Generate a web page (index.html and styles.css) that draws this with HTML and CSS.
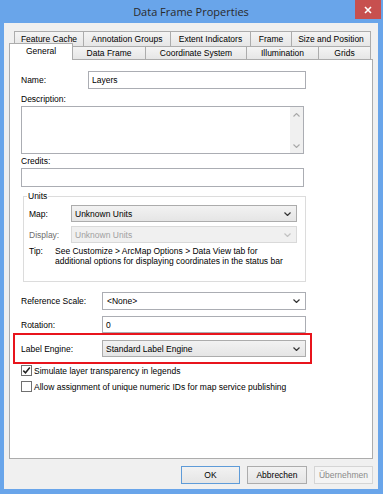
FILE: index.html
```
<!DOCTYPE html>
<html>
<head>
<meta charset="utf-8">
<title>Data Frame Properties</title>
<link rel="stylesheet" href="styles.css">
</head>
<body>
<div class="window">
  <div class="titlebar">
    <div></div>
    <div class="title">Data Frame Properties</div>
    <div class="close-wrap">
      <div class="close">
        <svg width="8" height="8" viewBox="0 0 8 8"><path d="M1 1 L7 7 M7 1 L1 7" stroke="#fff" stroke-width="1.6" fill="none"/></svg>
      </div>
    </div>
  </div>
  <div class="client">
    <div class="tabrow row1">
      <div class="tab t-fc">Feature Cache</div>
      <div class="tab t-ag">Annotation Groups</div>
      <div class="tab t-ei">Extent Indicators</div>
      <div class="tab t-fr">Frame</div>
      <div class="tab t-sp">Size and Position</div>
    </div>
    <div class="tabrow row2">
      <div class="tab sel t-ge">General</div>
      <div class="tab t-df">Data Frame</div>
      <div class="tab t-cs">Coordinate System</div>
      <div class="tab t-il">Illumination</div>
      <div class="tab t-gr">Grids</div>
    </div>
    <div class="panel">
      <div class="row h18">
        <span class="lbl w-name">Name:</span>
        <div class="input w-nameinput">Layers</div>
      </div>
      <div class="caption cap-desc">Description:</div>
      <div class="textarea">
        <div class="scroll">
          <svg width="7" height="4" viewBox="0 0 7 4"><polyline points="0.5,3.5 3.5,0.5 6.5,3.5" stroke="#a8a8a8" stroke-width="1.1" fill="none"/></svg>
          <svg width="7" height="4" viewBox="0 0 7 4"><polyline points="0.5,0.5 3.5,3.5 6.5,0.5" stroke="#a8a8a8" stroke-width="1.1" fill="none"/></svg>
        </div>
      </div>
      <div class="caption cap-cred">Credits:</div>
      <div class="input w-wide h19"></div>

      <fieldset class="group">
        <legend>Units</legend>
        <div class="row h17 g-map">
          <span class="lbl w-unit">Map:</span>
          <div class="combo w-unitcombo">
            <span class="ctext">Unknown Units</span>
            <svg class="chev" width="7" height="4" viewBox="0 0 7 4"><polyline points="0.5,0.5 3.5,3.5 6.5,0.5" stroke="#333" stroke-width="1.2" fill="none"/></svg>
          </div>
        </div>
        <div class="row h17 g-disp">
          <span class="lbl w-unit dim">Display:</span>
          <div class="combo disabled w-unitcombo">
            <span class="ctext">Unknown Units</span>
            <svg class="chev" width="7" height="4" viewBox="0 0 7 4"><polyline points="0.5,0.5 3.5,3.5 6.5,0.5" stroke="#c2c2c2" stroke-width="1.2" fill="none"/></svg>
          </div>
        </div>
        <div class="tip">
          <span class="tiplbl">Tip:</span>
          <span class="tiptext">See Customize &gt; ArcMap Options &gt; Data View tab for<br>additional options for displaying coordinates in the status bar</span>
        </div>
      </fieldset>

      <div class="row h18 r-ref">
        <span class="lbl w-lbl2">Reference Scale:</span>
        <div class="combo editable w-combo2">
          <span class="ctext">&lt;None&gt;</span>
          <svg class="chev" width="7" height="4" viewBox="0 0 7 4"><polyline points="0.5,0.5 3.5,3.5 6.5,0.5" stroke="#333" stroke-width="1.2" fill="none"/></svg>
        </div>
      </div>
      <div class="row h17 r-rot">
        <span class="lbl w-lbl2">Rotation:</span>
        <div class="input w-combo2 h17">0</div>
      </div>
      <div class="highlight">
        <div class="row h17">
          <span class="lbl w-lbl2">Label Engine:</span>
          <div class="combo w-combo2">
            <span class="ctext">Standard Label Engine</span>
            <svg class="chev" width="7" height="4" viewBox="0 0 7 4"><polyline points="0.5,0.5 3.5,3.5 6.5,0.5" stroke="#333" stroke-width="1.2" fill="none"/></svg>
          </div>
        </div>
      </div>
      <div class="cbrow cb1">
        <span class="cb">
          <svg width="9" height="9" viewBox="0 0 9 9"><polyline points="1.3,4.6 3.5,6.8 7.8,1.6" stroke="#222" stroke-width="1.5" fill="none"/></svg>
        </span>
        <span class="cbtext">Simulate layer transparency in legends</span>
      </div>
      <div class="cbrow cb2">
        <span class="cb"></span>
        <span class="cbtext">Allow assignment of unique numeric IDs for map service publishing</span>
      </div>
    </div>
    <div class="buttons">
      <div class="btn default">OK</div>
      <div class="btn w60">Abbrechen</div>
      <div class="btn off">Übernehmen</div>
    </div>
  </div>
</div>
</body>
</html>
```
FILE: styles.css
```
html, body {
  margin: 0;
  padding: 0;
}
body {
  font-family: "Liberation Sans", Arial, sans-serif;
  font-size: 8.5px;
  color: #000;
}
.window {
  width: 383px;
  height: 494px;
  box-sizing: border-box;
  background: #69a5ea;
  padding: 0 5px 5px 4px;
  display: flex;
  flex-direction: column;
}
.titlebar {
  height: 23px;
  flex: none;
  display: grid;
  grid-template-columns: 1fr auto 1fr;
  align-items: start;
}
.title {
  font-family: "Open Sans", "Noto Sans", sans-serif;
  font-size: 11px;
  line-height: 23px;
  color: #2a2a2a;
  white-space: nowrap;
}
.close-wrap {
  display: flex;
  justify-content: flex-end;
  margin-right: -3px;
}
.close {
  width: 26px;
  height: 19px;
  background: #c7504f;
  display: flex;
  align-items: center;
  justify-content: center;
}
.client {
  flex: 1;
  background: #f0f0f0;
  padding: 8px 5px 0 5px;
  display: flex;
  flex-direction: column;
}
.tabrow {
  display: flex;
  flex: none;
}
.row1 {
  height: 15px;
  margin-left: 5px;
}
.row2 {
  height: 13px;
  align-items: flex-end;
}
.tab {
  box-sizing: border-box;
  flex: none;
  border: 1px solid #acacac;
  border-bottom: none;
  background: linear-gradient(#f4f4f4, #e6e6e6);
  display: flex;
  align-items: center;
  justify-content: center;
  white-space: nowrap;
  margin-left: -1px;
}
.tab:first-child {
  margin-left: 0;
}
.row1 .tab { height: 15px; }
.row2 .tab { height: 13px; }
.row2 .tab.sel {
  height: 17px;
  margin-bottom: -1px;
  background: #fff;
  position: relative;
  z-index: 1;
  padding-bottom: 2px;
}
.t-fc { width: 70px; }
.t-ag { width: 88px; }
.t-ei { width: 81px; }
.t-fr { width: 42px; }
.t-sp { width: 80px; }
.t-ge { width: 64px; }
.t-df { width: 74px; }
.t-cs { width: 102px; }
.t-il { width: 73px; }
.t-gr { width: 53px; }

.panel {
  flex: none;
  box-sizing: border-box;
  height: 400px;
  background: #fff;
  border: 1px solid #acacac;
  padding: 11px 0 0 11px;
  display: flex;
  flex-direction: column;
  align-items: flex-start;
}
.row {
  display: flex;
  align-items: center;
  flex: none;
}
.h17 { height: 17px; }
.h18 { height: 18px; }
.h19 { height: 19px; }
.lbl {
  flex: none;
  white-space: nowrap;
}
.dim { color: #6d6d6d; }
.w-name { width: 67px; }
.w-unit { width: 42px; }
.w-lbl2 { width: 81px; }

.input {
  box-sizing: border-box;
  border: 1px solid #abadb3;
  background: #fff;
  height: 18px;
  display: flex;
  align-items: center;
  padding-left: 3px;
  flex: none;
}
.input.h17 { height: 17px; }
.input.h19 { height: 19px; }
.w-nameinput { width: 218px; }
.w-wide { width: 283px; }
.w-combo2 { width: 204px; }
.w-unitcombo { width: 226px; }

.caption {
  line-height: 10px;
  flex: none;
}
.cap-desc { margin: 5px 0 2px; }
.cap-cred { margin: 2px 0 2px; }

.textarea {
  box-sizing: border-box;
  width: 283px;
  height: 48px;
  border: 1px solid #abadb3;
  background: #fff;
  display: flex;
  justify-content: flex-end;
  flex: none;
}
.scroll {
  width: 13px;
  background: #f0f0f0;
  display: flex;
  flex-direction: column;
  justify-content: space-between;
  align-items: center;
  padding: 6px 0 5px;
  box-sizing: border-box;
}

.group {
  box-sizing: border-box;
  width: 283px;
  margin: 4px 0 0 2px;
  padding: 0 0 15px 5px;
  border: 1px solid #dcdcdc;
  min-width: 0;
  flex: none;
}
.group legend {
  padding: 0 1px;
  margin-left: -2px;
  line-height: 10px;
}
.g-map { margin-top: 4px; }
.g-disp { margin-top: 4px; }
.tip {
  display: flex;
  margin-top: 3px;
  line-height: 10px;
}
.tiplbl {
  width: 26px;
  flex: none;
}
.tiptext {
  white-space: nowrap;
}

.combo {
  box-sizing: border-box;
  height: 17px;
  border: 1px solid #acacac;
  background: linear-gradient(#f2f2f2, #e5e5e5);
  display: flex;
  align-items: center;
  padding: 0 5px 0 3px;
  flex: none;
}
.r-ref .combo { height: 18px; }
.combo .ctext {
  flex: 1;
  white-space: nowrap;
}
.combo .chev {
  flex: none;
}
.combo.disabled {
  background: #f0f0f0;
  border-color: #d9d9d9;
  color: #a0a0a0;
}
.combo.editable {
  background: #fff;
  border-color: #abadb3;
  padding-left: 4px;
}
.r-ref { margin-top: 10px; }
.r-rot { margin-top: 6px; }

.highlight {
  box-sizing: border-box;
  width: 299px;
  margin-left: -8px;
  border: 2px solid #e8141c;
  padding: 5px 0 5px 6px;
  flex: none;
}

.cbrow {
  display: flex;
  align-items: center;
  height: 13px;
  flex: none;
}
.cb1 { margin-top: 0; }
.cb2 { margin-top: 3px; }
.cb {
  box-sizing: border-box;
  width: 11px;
  height: 11px;
  border: 1px solid #707070;
  background: #fff;
  display: flex;
  align-items: center;
  justify-content: center;
  flex: none;
}
.cbtext {
  margin-left: 2px;
  white-space: nowrap;
}

.buttons {
  display: flex;
  justify-content: flex-end;
  gap: 7px;
  margin-top: 7px;
  flex: none;
}
.btn {
  box-sizing: border-box;
  width: 59px;
  height: 18px;
  border: 1px solid #acacac;
  background: linear-gradient(#f2f2f2, #e5e5e5);
  display: flex;
  align-items: center;
  justify-content: center;
}
.btn.w60 { width: 60px; }
.btn.default {
  border-color: #5e9bd8;
}
.btn.off {
  background: #f4f4f4;
  border-color: #d5d5d5;
  color: #8a8a8a;
}
```
